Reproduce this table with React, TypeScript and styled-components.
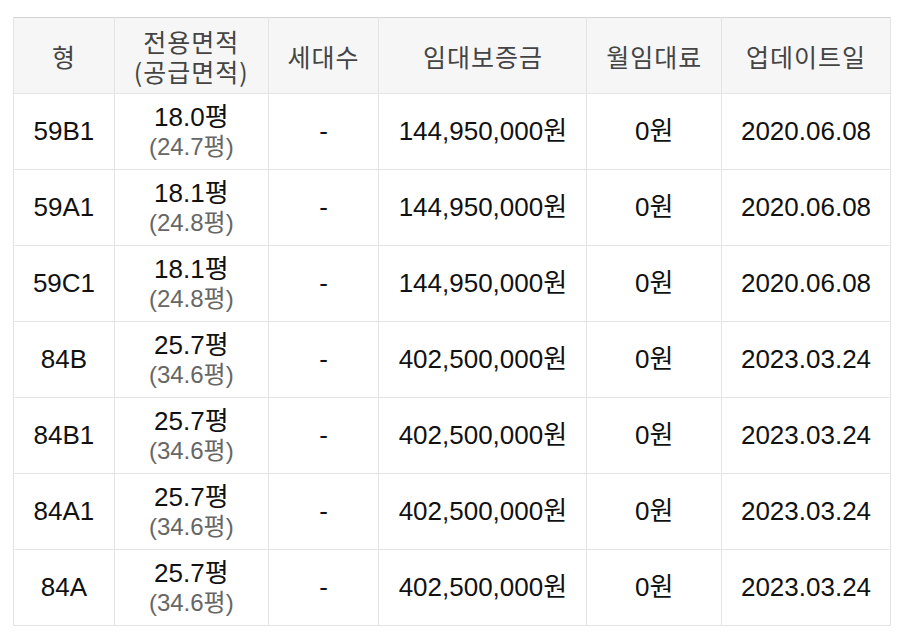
import React from "react";
import styled, { createGlobalStyle } from "styled-components";

const Global = createGlobalStyle`
  html, body { margin: 0; padding: 0; background: #fff; }
  body { font-family: "Liberation Sans", Arial, "Noto Sans CJK KR", sans-serif; }
`;

const Wrap = styled.div`
  padding: 17px 18px 0 13px;
`;

const Table = styled.table`
  border-collapse: collapse;
  table-layout: fixed;
  border-top: 1px solid #d4d4d4;
`;

const Th = styled.th<{ $w: number }>`
  width: ${(p) => p.$w}px;
  height: 75px;
  padding: 0;
  background: #f6f6f6;
  border: 1px solid #e4e4e4;
  border-top: none;
  color: #444;
  font-family: "Noto Sans CJK KR", "Liberation Sans", sans-serif;
  font-weight: 400;
  font-size: 25px;
  letter-spacing: 1px;
  line-height: 30px;
  text-align: center;
  vertical-align: middle;
`;

const HeadLine = styled.div`
  line-height: 30px;
`;

const Td = styled.td`
  height: 75px;
  padding: 0;
  border: 1px solid #e4e4e4;
  color: #111;
  font-size: 26px;
  line-height: 29px;
  text-align: center;
  vertical-align: middle;
`;

const Sub = styled.div`
  color: #666;
  font-size: 24px;
  line-height: 29px;
`;

const Main = styled.div`
  line-height: 29px;
`;

const rows = [
  ["59B1", "18.0", "24.7", "144,950,000", "2020.06.08"],
  ["59A1", "18.1", "24.8", "144,950,000", "2020.06.08"],
  ["59C1", "18.1", "24.8", "144,950,000", "2020.06.08"],
  ["84B", "25.7", "34.6", "402,500,000", "2023.03.24"],
  ["84B1", "25.7", "34.6", "402,500,000", "2023.03.24"],
  ["84A1", "25.7", "34.6", "402,500,000", "2023.03.24"],
  ["84A", "25.7", "34.6", "402,500,000", "2023.03.24"],
];

export default function App() {
  return (
    <>
      <Global />
      <Wrap>
        <Table>
          <thead>
            <tr>
              <Th $w={100}>형</Th>
              <Th $w={153}>
                <HeadLine>전용면적</HeadLine>
                <HeadLine>(공급면적)</HeadLine>
              </Th>
              <Th $w={110}>세대수</Th>
              <Th $w={207}>임대보증금</Th>
              <Th $w={134}>월임대료</Th>
              <Th $w={168}>업데이트일</Th>
            </tr>
          </thead>
          <tbody>
            {rows.map((r, i) => (
              <tr key={i}>
                <Td>{r[0]}</Td>
                <Td>
                  <Main>{r[1]}평</Main>
                  <Sub>({r[2]}평)</Sub>
                </Td>
                <Td>-</Td>
                <Td>{r[3]}원</Td>
                <Td>0원</Td>
                <Td>{r[4]}</Td>
              </tr>
            ))}
          </tbody>
        </Table>
      </Wrap>
    </>
  );
}
